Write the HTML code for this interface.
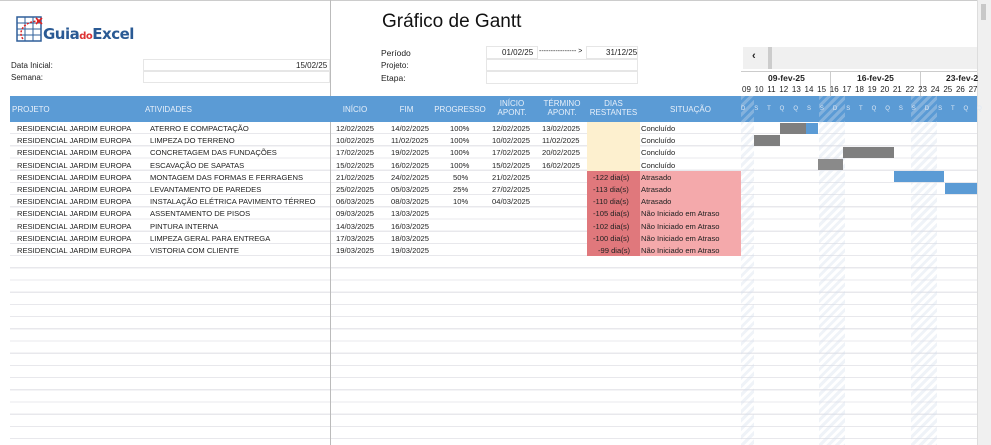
<!DOCTYPE html>
<html><head><meta charset="utf-8"><style>
*{margin:0;padding:0;box-sizing:border-box}
body{width:991px;height:445px;overflow:hidden;background:#fff;font-family:"Liberation Sans",sans-serif;font-size:8px;color:#222;position:relative}
.a{position:absolute;white-space:nowrap}
.lines{position:absolute;left:10px;top:122px;width:967px;height:323px;background:repeating-linear-gradient(to bottom,transparent 0,transparent 11px,#e8e8ec 11px,#e8e8ec 12.2px)}
.hdr{position:absolute;left:10px;top:96px;width:967px;height:26px;background:#5b9bd5}
.h{position:absolute;color:#e8f0fa;font-size:8px;text-align:center;line-height:9px}
.row{position:absolute;left:10px;width:731px;height:12.2px;font-size:7.6px;line-height:13px}
.row span{position:absolute;white-space:nowrap}
.box{position:absolute;border:1px solid #e6e6e6;background:#fff}
.we{position:absolute;top:96px;width:13px;height:349px;background:repeating-linear-gradient(135deg,rgba(210,220,235,.35) 0 3px,transparent 3px 6px)}
.g{position:absolute;height:11px;background:#7f7f7f}
.b{position:absolute;height:11px;background:#5b9bd5}
</style></head><body>
<div class="lines"></div>
<div class="a" style="left:0;top:0;width:977px;height:1px;background:#ccc"></div>
<div class="a" style="left:330px;top:0;width:1px;height:445px;background:#bbb"></div>
<div class="a" style="left:977px;top:0;width:14px;height:445px;background:#f0f0f0;border-left:1px solid #ddd"></div>
<div class="a" style="left:981px;top:4px;width:5px;height:16px;background:#c8c8c8"></div>
<svg class="a" style="left:15px;top:15px" width="30" height="30" viewBox="0 0 30 30"><rect x="2" y="2" width="24" height="24" fill="none" stroke="#2f5f9a" stroke-width="1.5"/><path d="M2 8H26M2 14H26M2 20H26M10 2V26M18 2V26" stroke="#2f5f9a" stroke-width="1"/><path d="M24 6C10 6 2 16 8 24" fill="none" stroke="#d22" stroke-width="1.5" stroke-dasharray="2 1.5"/><path d="M21 3l6 6M27 3l-6 6" stroke="#d22" stroke-width="1.6"/></svg>
<div class="a" style="left:43px;top:25px;font-size:15px;font-weight:bold;color:#2a5a94;font-family:'DejaVu Sans',sans-serif;letter-spacing:-0.5px">Guia<span style="color:#d33;font-size:10px">do</span>Excel</div>
<div class="a" style="left:11px;top:61px">Data Inicial:</div>
<div class="a" style="left:11px;top:73px">Semana:</div>
<div class="box" style="left:143px;top:59px;width:187px;height:12px"></div>
<div class="box" style="left:143px;top:71px;width:187px;height:12px"></div>
<div class="a" style="left:296px;top:61px">15/02/25</div>
<div class="a" style="left:382px;top:11px;font-size:19px;color:#111">Gráfico de Gantt</div>
<div class="a" style="left:381px;top:48px;font-size:8.5px">Período</div>
<div class="a" style="left:381px;top:61px">Projeto:</div>
<div class="a" style="left:381px;top:73px;font-size:8.5px">Etapa:</div>
<div class="box" style="left:486px;top:46px;width:52px;height:13px"></div>
<div class="box" style="left:586px;top:46px;width:52px;height:13px"></div>
<div class="box" style="left:486px;top:59px;width:152px;height:12px"></div>
<div class="box" style="left:486px;top:71px;width:152px;height:13px"></div>
<div class="a" style="left:502px;top:48px">01/02/25</div>
<div class="a" style="left:539px;top:48px;font-size:7px">---------------- &gt;</div>
<div class="a" style="left:606px;top:48px">31/12/25</div>
<div class="a" style="left:743px;top:47px;width:234px;height:22px;background:#f0f0f0"></div>
<div class="a" style="left:752px;top:50px;font-size:11px;font-weight:bold">‹</div>
<div class="a" style="left:768px;top:47px;width:4px;height:22px;background:#ccc"></div>
<div class="a" style="left:741px;top:71px;width:236px;height:25px;border-top:1px solid #ccc"></div>
<div class="a" style="left:830px;top:71px;width:1px;height:25px;background:#ccc"></div>
<div class="a" style="left:920px;top:71px;width:1px;height:25px;background:#ccc"></div>
<div class="a" style="left:768px;top:73px;font-weight:bold;font-size:8.5px">09-fev-25</div>
<div class="a" style="left:857px;top:73px;font-weight:bold;font-size:8.5px">16-fev-25</div>
<div class="a" style="left:946px;top:73px;font-weight:bold;font-size:8.5px">23-fev-2</div>
<div class="a" style="left:742px;top:85px;font-size:8px;word-spacing:1.5px">09 10 11 12 13 14 15 16 17 18 19 20 21 22 23 24 25 26 27</div>
<div class="hdr"></div>
<div class="h" style="left:12px;top:105px;text-align:left">PROJETO</div>
<div class="h" style="left:145px;top:105px;text-align:left">ATIVIDADES</div>
<div class="h" style="left:330px;top:105px;width:50px">INÍCIO</div>
<div class="h" style="left:380px;top:105px;width:53px">FIM</div>
<div class="h" style="left:433px;top:105px;width:54px">PROGRESSO</div>
<div class="h" style="left:487px;top:99px;width:50px">INÍCIO<br>APONT.</div>
<div class="h" style="left:537px;top:99px;width:50px">TÉRMINO<br>APONT.</div>
<div class="h" style="left:587px;top:99px;width:53px">DIAS<br>RESTANTES</div>
<div class="h" style="left:640px;top:105px;width:101px">SITUAÇÃO</div>
<div class="a" style="left:741px;top:106px;font-size:6px;color:#dde8f5;word-spacing:7.3px">D S T Q Q S S D S T Q Q S S D S T Q Q</div>
<div class="we" style="left:741px"></div><div class="we" style="left:819px;width:26px"></div><div class="we" style="left:911px;width:26px"></div>
<div class="a" style="left:587px;top:122px;width:53px;height:49px;background:#fdf0cf"></div>
<div class="a" style="left:587px;top:171px;width:53px;height:85px;background:#e0787c"></div>
<div class="a" style="left:640px;top:171px;width:101px;height:85px;background:#f4a9ab"></div>
<div class="g" style="left:780px;top:123px;width:26px"></div><div class="b" style="left:806px;top:123px;width:12px"></div>
<div class="g" style="left:754px;top:135px;width:26px"></div>
<div class="g" style="left:843px;top:147px;width:51px"></div>
<div class="g" style="left:818px;top:159px;width:25px;background:#8a8a8a"></div>
<div class="b" style="left:894px;top:171px;width:50px"></div>
<div class="b" style="left:945px;top:183px;width:32px"></div>
<div class="row" style="top:122px"><span style="left:7px">RESIDENCIAL JARDIM EUROPA</span><span style="left:140px">ATERRO E COMPACTAÇÃO</span><span style="left:326px">12/02/2025</span><span style="left:381px">14/02/2025</span><span style="left:440px">100%</span><span style="left:482px">12/02/2025</span><span style="left:532px">13/02/2025</span><span style="left:631px">Concluído</span></div>
<div class="row" style="top:134.2px"><span style="left:7px">RESIDENCIAL JARDIM EUROPA</span><span style="left:140px">LIMPEZA DO TERRENO</span><span style="left:326px">10/02/2025</span><span style="left:381px">11/02/2025</span><span style="left:440px">100%</span><span style="left:482px">10/02/2025</span><span style="left:532px">11/02/2025</span><span style="left:631px">Concluído</span></div>
<div class="row" style="top:146.4px"><span style="left:7px">RESIDENCIAL JARDIM EUROPA</span><span style="left:140px">CONCRETAGEM DAS FUNDAÇÕES</span><span style="left:326px">17/02/2025</span><span style="left:381px">19/02/2025</span><span style="left:440px">100%</span><span style="left:482px">17/02/2025</span><span style="left:532px">20/02/2025</span><span style="left:631px">Concluído</span></div>
<div class="row" style="top:158.6px"><span style="left:7px">RESIDENCIAL JARDIM EUROPA</span><span style="left:140px">ESCAVAÇÃO DE SAPATAS</span><span style="left:326px">15/02/2025</span><span style="left:381px">16/02/2025</span><span style="left:440px">100%</span><span style="left:482px">15/02/2025</span><span style="left:532px">16/02/2025</span><span style="left:631px">Concluído</span></div>
<div class="row" style="top:170.8px"><span style="left:7px">RESIDENCIAL JARDIM EUROPA</span><span style="left:140px">MONTAGEM DAS FORMAS E FERRAGENS</span><span style="left:326px">21/02/2025</span><span style="left:381px">24/02/2025</span><span style="left:443px">50%</span><span style="left:482px">21/02/2025</span><span style="left:583px">-122 dia(s)</span><span style="left:631px">Atrasado</span></div>
<div class="row" style="top:183px"><span style="left:7px">RESIDENCIAL JARDIM EUROPA</span><span style="left:140px">LEVANTAMENTO DE PAREDES</span><span style="left:326px">25/02/2025</span><span style="left:381px">05/03/2025</span><span style="left:443px">25%</span><span style="left:482px">27/02/2025</span><span style="left:583px">-113 dia(s)</span><span style="left:631px">Atrasado</span></div>
<div class="row" style="top:195.2px"><span style="left:7px">RESIDENCIAL JARDIM EUROPA</span><span style="left:140px">INSTALAÇÃO ELÉTRICA PAVIMENTO TÉRREO</span><span style="left:326px">06/03/2025</span><span style="left:381px">08/03/2025</span><span style="left:443px">10%</span><span style="left:482px">04/03/2025</span><span style="left:583px">-110 dia(s)</span><span style="left:631px">Atrasado</span></div>
<div class="row" style="top:207.4px"><span style="left:7px">RESIDENCIAL JARDIM EUROPA</span><span style="left:140px">ASSENTAMENTO DE PISOS</span><span style="left:326px">09/03/2025</span><span style="left:381px">13/03/2025</span><span style="left:583px">-105 dia(s)</span><span style="left:631px">Não Iniciado em Atraso</span></div>
<div class="row" style="top:219.6px"><span style="left:7px">RESIDENCIAL JARDIM EUROPA</span><span style="left:140px">PINTURA INTERNA</span><span style="left:326px">14/03/2025</span><span style="left:381px">16/03/2025</span><span style="left:583px">-102 dia(s)</span><span style="left:631px">Não Iniciado em Atraso</span></div>
<div class="row" style="top:231.8px"><span style="left:7px">RESIDENCIAL JARDIM EUROPA</span><span style="left:140px">LIMPEZA GERAL PARA ENTREGA</span><span style="left:326px">17/03/2025</span><span style="left:381px">18/03/2025</span><span style="left:583px">-100 dia(s)</span><span style="left:631px">Não Iniciado em Atraso</span></div>
<div class="row" style="top:244px"><span style="left:7px">RESIDENCIAL JARDIM EUROPA</span><span style="left:140px">VISTORIA COM CLIENTE</span><span style="left:326px">19/03/2025</span><span style="left:381px">19/03/2025</span><span style="left:588px">-99 dia(s)</span><span style="left:631px">Não Iniciado em Atraso</span></div>
</body></html>
